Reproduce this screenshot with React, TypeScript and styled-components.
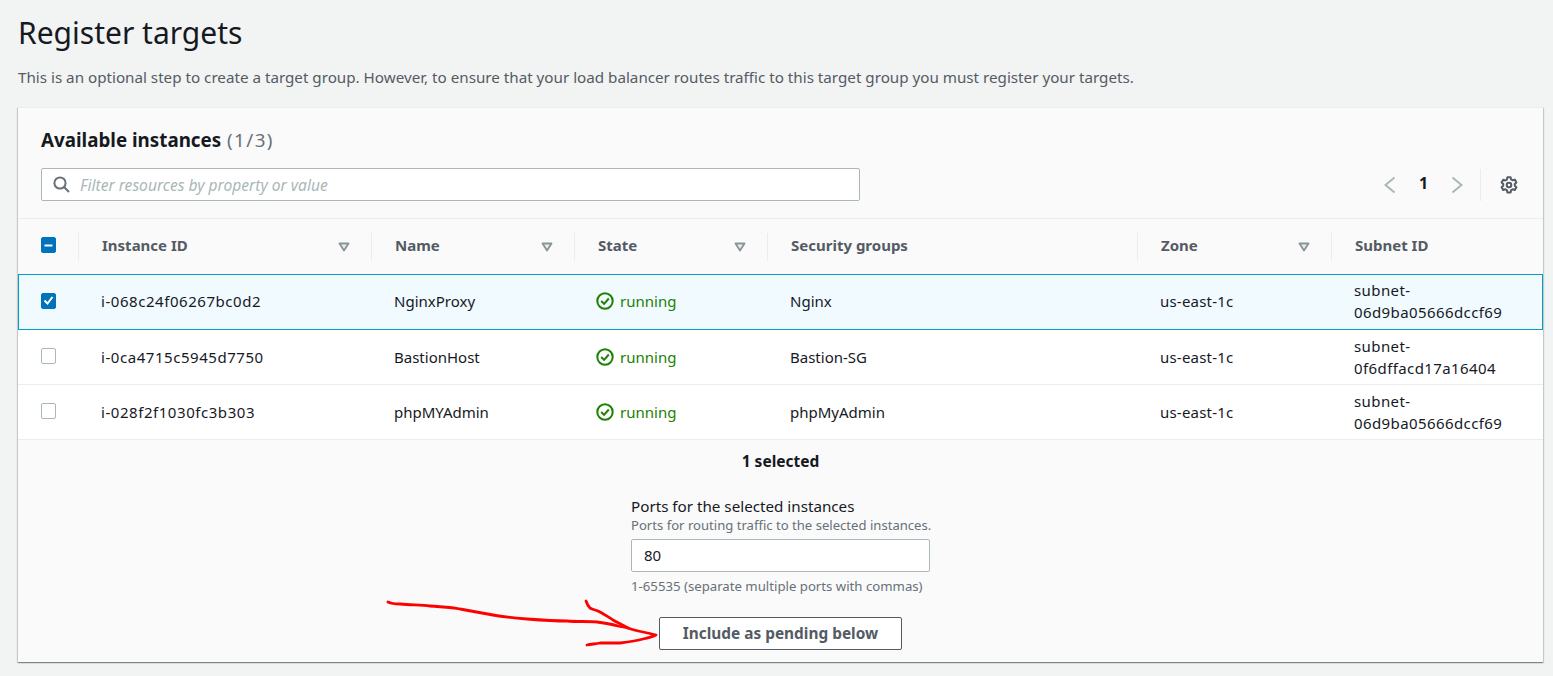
import React from "react";
import styled, { createGlobalStyle } from "styled-components";

const Global = createGlobalStyle`
  html, body { margin: 0; padding: 0; background: #f2f3f3; }
  body { font-family: "Noto Sans", "Open Sans", sans-serif; color: #16191f; font-size: 15px; }
  * { box-sizing: border-box; }
`;

const Page = styled.div`
  position: relative;
  width: 1553px;
  height: 676px;
  overflow: hidden;
  padding: 13px 10px 0 18px;
`;
const Title = styled.h1`
  margin: 0;
  font-size: 30px;
  line-height: 40px;
  font-weight: 400;
  color: #16191f;
`;
const Description = styled.p`
  margin: 4px 0 0;
  font-size: 15.2px;
  height: 30px;
  line-height: 40px;
  color: #545b64;
`;
const Card = styled.section`
  margin-top: 20px;
  width: 1525px;
  height: 555px;
  background: #fafafa;
  box-shadow: 0 1px 1px 0 rgba(0, 28, 36, 0.3), 1px 1px 1px 0 rgba(0, 28, 36, 0.15), -1px 1px 1px 0 rgba(0, 28, 36, 0.15);
  border-top: 1px solid #eaeded;
`;
const CardHeader = styled.header`
  height: 111px;
  padding: 19px 25px 0 23px;
  border-bottom: 1px solid #eaeded;
`;
const HeadingRow = styled.h2`
  margin: 0;
  font-size: 18.8px;
  line-height: 26px;
  font-weight: 700;
  color: #16191f;
`;
const Count = styled.span`
  font-weight: 400;
  color: #687078;
  letter-spacing: 1.4px;
  margin-left: 1px;
`;
const ToolRow = styled.div`
  margin-top: 15px;
  display: flex;
  align-items: center;
  justify-content: space-between;
`;
const Filter = styled.div`
  width: 819px;
  height: 33px;
  display: flex;
  align-items: center;
  gap: 10px;
  padding-left: 11px;
  background: #fff;
  border: 1px solid #aab7b8;
  border-radius: 2px;
  font-style: italic;
  font-size: 15.6px;
  color: #aab7b8;
`;
const Tools = styled.div`
  display: flex;
  align-items: center;
  height: 32px;
`;
const PageNumber = styled.span`
  font-weight: 700;
  font-size: 16px;
  color: #16191f;
  width: 55px;
  text-align: center;
  margin-top: -3px;
`;
const ToolDivider = styled.span`
  width: 1px;
  height: 32px;
  background: #eaeded;
  margin: 0 19px 0 17px;
`;
const COLUMNS = "60px 293px 203px 193px 370px 194px 212px";
const HeadRow = styled.div`
  display: grid;
  grid-template-columns: ${COLUMNS};
  height: 55px;
  align-items: center;
`;
const HeadCell = styled.div`
  height: 28px;
  display: flex;
  align-items: center;
  justify-content: space-between;
  padding: 0 21px 0 23px;
  border-left: 1px solid #eaeded;
  font-weight: 700;
  color: #545b64;
`;
const HeadLabel = styled.span`
  margin-top: -3px;
`;
const CheckCell = styled.div`
  display: flex;
  align-items: center;
  padding: 0 0 3px 23px;
`;
const Box = styled.span<{ $on?: boolean }>`
  width: 15px;
  height: 16px;
  border-radius: 2px;
  display: flex;
  align-items: center;
  justify-content: center;
  background: ${(p) => (p.$on ? "#0073bb" : "#fff")};
  border: 1px solid ${(p) => (p.$on ? "#0073bb" : "#aab7b8")};
`;
const Row = styled.div<{ $selected?: boolean }>`
  display: grid;
  grid-template-columns: ${COLUMNS};
  height: ${(p) => (p.$selected ? "56px" : "55px")};
  align-items: center;
  background: ${(p) => (p.$selected ? "#f1faff" : "#fff")};
  box-shadow: ${(p) => (p.$selected ? "inset 0 0 0 1px #00a1c9" : "inset 0 -1px 0 #eaeded")};
`;
const Cell = styled.div`
  padding: 0 0 2px 23px;
  line-height: 22px;
`;
const IdCell = styled(Cell)`
  letter-spacing: 0.55px;
`;
const ZoneCell = styled(Cell)`
  letter-spacing: 0.2px;
`;
const SubnetCell = styled(Cell)`
  letter-spacing: 0.4px;
`;
const Running = styled.span`
  display: flex;
  align-items: center;
  gap: 6px;
  margin-left: -1px;
  color: #1d8102;
`;
const Footer = styled.div`
  display: flex;
  flex-direction: column;
  align-items: center;
`;
const Selected = styled.div`
  font-weight: 700;
  font-size: 15.5px;
  margin-top: 10px;
  line-height: 22px;
`;
const Field = styled.div`
  width: 299px;
  margin-top: 23px;
`;
const FieldLabel = styled.div`
  font-size: 15.2px;
  line-height: 22px;
  color: #16191f;
`;
const FieldHint = styled.div`
  font-size: 13.1px;
  line-height: 16px;
  white-space: nowrap;
  color: #687078;
`;
const PortInput = styled.div`
  margin-top: 6px;
  height: 33px;
  background: #fff;
  border: 1px solid #aab7b8;
  border-radius: 2px;
  padding-left: 12px;
  line-height: 31px;
`;
const Constraint = styled.div`
  margin-top: 6px;
  font-size: 13.2px;
  line-height: 16px;
  white-space: nowrap;
  color: #687078;
`;
const Button = styled.button`
  margin-top: 23px;
  width: 243px;
  height: 33px;
  background: #fff;
  border: 1px solid #545b64;
  border-radius: 2px;
  font: 700 15.4px "Noto Sans", sans-serif;
  color: #545b64;
`;
const Scribble = styled.svg`
  position: absolute;
  left: 0;
  top: 0;
  pointer-events: none;
`;

const SortIcon = () => (
  <svg width="12" height="10" viewBox="0 0 12 10">
    <path d="M1.5 1.5h9L6 8.5z" fill="#eaeded" stroke="#879596" strokeWidth="1.8" strokeLinejoin="round" />
  </svg>
);
const StatusIcon = () => (
  <svg width="18" height="18" viewBox="0 0 18 18" fill="none" stroke="#1d8102" strokeWidth="2">
    <circle cx="9" cy="9" r="7.7" />
    <path d="M5.2 9l2.9 2.9 4.7-5.4" />
  </svg>
);
const CheckIcon = () => (
  <svg width="11" height="11" viewBox="0 0 11 11" fill="none" stroke="#fff" strokeWidth="2">
    <path d="M1.5 5.5l3 3 5-6.5" />
  </svg>
);
const MinusIcon = () => (
  <svg width="11" height="11" viewBox="0 0 11 11" stroke="#fff" strokeWidth="2">
    <path d="M1.5 5.5h8" />
  </svg>
);
const SearchIcon = () => (
  <svg width="17" height="17" viewBox="0 0 17 17" fill="none" stroke="#687078" strokeWidth="2">
    <circle cx="7" cy="7" r="5.6" />
    <path d="M11 11l5 5" />
  </svg>
);
const Chevron = ({ right }: { right?: boolean }) => (
  <svg width="12" height="18" viewBox="0 0 12 18" fill="none" stroke="#aab7b8" strokeWidth="2">
    <path d={right ? "M1.5 1.5L10.5 9l-9 7.5" : "M10.5 1.5L1.5 9l9 7.5"} />
  </svg>
);
const GearIcon = () => (
  <svg width="18" height="18" viewBox="0 0 18 18" fill="none" stroke="#545b64" strokeWidth="2">
    <circle cx="9" cy="9" r="2.3" />
    <path d="M7.4 1.2h3.2l.5 2.2 1.6.9 2.1-.7 1.6 2.8-1.6 1.5v1.8l1.6 1.5-1.6 2.8-2.1-.7-1.6.9-.5 2.3H7.4l-.5-2.3-1.6-.9-2.1.7-1.6-2.8 1.6-1.5V8.1L1.6 6.6l1.6-2.8 2.1.7 1.6-.9z" strokeLinejoin="round" />
  </svg>
);

const rows = [
  { id: "i-068c24f06267bc0d2", name: "NginxProxy", sg: "Nginx", sub: "06d9ba05666dccf69", selected: true },
  { id: "i-0ca4715c5945d7750", name: "BastionHost", sg: "Bastion-SG", sub: "0f6dffacd17a16404" },
  { id: "i-028f2f1030fc3b303", name: "phpMYAdmin", sg: "phpMyAdmin", sub: "06d9ba05666dccf69" },
];
const headers: [string, boolean][] = [
  ["Instance ID", true],
  ["Name", true],
  ["State", true],
  ["Security groups", false],
  ["Zone", true],
  ["Subnet ID", false],
];

export default function App() {
  return (
    <Page>
      <Global />
      <Title>Register targets</Title>
      <Description>
        This is an optional step to create a target group. However, to ensure that your load balancer routes traffic to this target group you must register your targets.
      </Description>
      <Card>
        <CardHeader>
          <HeadingRow>
            Available instances <Count>(1/3)</Count>
          </HeadingRow>
          <ToolRow>
            <Filter>
              <SearchIcon />
              Filter resources by property or value
            </Filter>
            <Tools>
              <Chevron />
              <PageNumber>1</PageNumber>
              <Chevron right />
              <ToolDivider />
              <GearIcon />
            </Tools>
          </ToolRow>
        </CardHeader>
        <HeadRow>
          <CheckCell>
            <Box $on>
              <MinusIcon />
            </Box>
          </CheckCell>
          {headers.map(([label, sortable]) => (
            <HeadCell key={label}>
              <HeadLabel>{label}</HeadLabel>
              {sortable && <SortIcon />}
            </HeadCell>
          ))}
        </HeadRow>
        {rows.map((r) => (
          <Row key={r.id} $selected={r.selected}>
            <CheckCell>
              <Box $on={r.selected}>{r.selected && <CheckIcon />}</Box>
            </CheckCell>
            <IdCell>{r.id}</IdCell>
            <Cell>{r.name}</Cell>
            <Cell>
              <Running>
                <StatusIcon />
                running
              </Running>
            </Cell>
            <Cell>{r.sg}</Cell>
            <ZoneCell>us-east-1c</ZoneCell>
            <SubnetCell>
              subnet-
              <br />
              {r.sub}
            </SubnetCell>
          </Row>
        ))}
        <Footer>
          <Selected>1 selected</Selected>
          <Field>
            <FieldLabel>Ports for the selected instances</FieldLabel>
            <FieldHint>Ports for routing traffic to the selected instances.</FieldHint>
            <PortInput>80</PortInput>
            <Constraint>1-65535 (separate multiple ports with commas)</Constraint>
          </Field>
          <Button>Include as pending below</Button>
        </Footer>
      </Card>
      <Scribble width="1553" height="676" viewBox="0 0 1553 676" fill="none" stroke="#f00" strokeWidth="2.8" strokeLinecap="round" strokeLinejoin="round">
        <path d="M388 602C392 604 396 604 400 604C412 605 421 605 430 606C441 607 451 607 460 609C471 611 482 613 493 615C505 617 516 618 527 619C540 620 554 621 567 621C578 622 588 621 597 622C605 623 612 624 618 626C622 627 625 627 628 628C633 630 638 631 643 632C648 633 652 634 656 635C652 637 648 638 643 639C636 641 628 642 620 643C613 643 606 643 600 643C596 644 591 644 587 645" />
        <path d="M586 601C587 604 588 606 590 608C593 610 597 610 600 612C605 615 609 617 613 620C618 623 623 625 628 628" />
      </Scribble>
    </Page>
  );
}
